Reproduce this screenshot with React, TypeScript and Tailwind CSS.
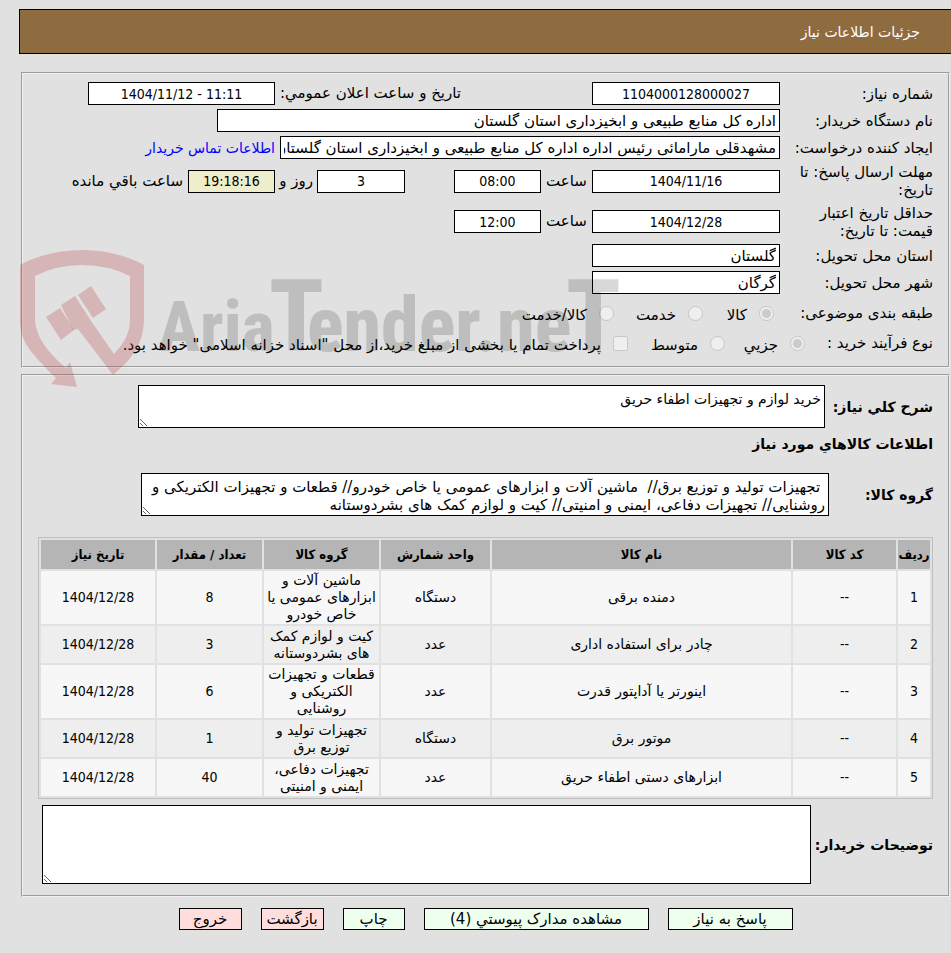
import React from "react";

const sans = "font-['DejaVu_Sans',sans-serif]";
const condensed = "font-['DejaVu_Sans_Condensed','DejaVu_Sans',sans-serif]";

const field = "h-[23px] border border-black px-[3px] leading-[18px] outline-none";
const textField = `${field} bg-white text-[15px] ${sans}`;
const numberField = `${field} text-center text-sm ${condensed}`;
const area =
  "block border border-black bg-white px-[3px] py-1 leading-[18px] outline-none resize";
const rowLabel = "w-[153px] shrink-0 pe-[14px] leading-[18px]";
const strongLabel = "shrink-0 text-sm font-bold";
const fieldset =
  "min-w-0 border-2 border-[#f0f0f0] px-[15px] [border-style:groove]";

type Item = {
  name: string;
  unit: string;
  group: string;
  count: string;
  date: string;
};

const items: Item[] = [
  { name: "دمنده برقی", unit: "دستگاه", group: "ماشین آلات و ابزارهای عمومی یا خاص خودرو", count: "8", date: "1404/12/28" },
  { name: "چادر برای استفاده اداری", unit: "عدد", group: "کیت و لوازم کمک های بشردوستانه", count: "3", date: "1404/12/28" },
  { name: "اینورتر یا آداپتور قدرت", unit: "عدد", group: "قطعات و تجهیزات الکتریکی و روشنایی", count: "6", date: "1404/12/28" },
  { name: "موتور برق", unit: "دستگاه", group: "تجهیزات تولید و توزیع برق", count: "1", date: "1404/12/28" },
  { name: "ابزارهای دستی اطفاء حریق", unit: "عدد", group: "تجهیزات دفاعی، ایمنی و امنیتی", count: "40", date: "1404/12/28" },
];

const columns = [
  { title: "ردیف", width: "w-[32px]" },
  { title: "کد کالا", width: "w-[103px]" },
  { title: "نام کالا", width: "w-auto" },
  { title: "واحد شمارش", width: "w-[109px]" },
  { title: "گروه کالا", width: "w-[115px]" },
  { title: "تعداد / مقدار", width: "w-[105px]" },
  { title: "تاریخ نیاز", width: "w-[114px]" },
];

function TextField({ id, value, width }: { id: string; value: string; width: string }) {
  return <input id={id} readOnly value={value} className={`${textField} ${width}`} />;
}

function NumberField({
  id,
  value,
  className,
  label,
  background = "bg-white",
}: {
  id: string;
  value: string;
  className: string;
  label?: string;
  background?: string;
}) {
  return (
    <input
      id={id}
      aria-label={label}
      dir="ltr"
      readOnly
      value={value}
      className={`${numberField} ${background} ${className}`}
    />
  );
}

function Choice({
  type = "radio",
  name,
  text,
  checked = false,
  width,
}: {
  type?: "radio" | "checkbox";
  name: string;
  text: string;
  checked?: boolean;
  width: string;
}) {
  return (
    <label className={`flex shrink-0 items-center gap-3 whitespace-nowrap ${width}`}>
      <input
        type={type}
        name={name}
        disabled
        defaultChecked={checked}
        className="size-[15px] shrink-0"
      />
      <span className="pt-1">{text}</span>
    </label>
  );
}

function Watermark() {
  return (
    <svg
      aria-hidden="true"
      className="pointer-events-none absolute left-5 top-[245px]"
      width="605"
      height="145"
      viewBox="20 245 605 145"
    >
      <g fill="#b8323c" fillOpacity="0.25">
        <path d="M20 265Q48 250 82 250Q116 250 144 265V318C144 344 132 359 113 375L78 329L73 330L61 305L75 296L91 321L114 354C125 342 130 333 130 318V276Q108 265 82 265Q56 265 35 276V318C35 338 50 354 66 368L70 362L77 387L51 384L56 378C35 357 20 343 20 322Z" />
        <path d="M46 317L60 308L74 330L61 340Z" />
        <path d="M78 295L91 286L106 309L93 318Z" />
      </g>
      <g
        opacity="0.15"
        fontFamily="'Roboto Condensed', Roboto, sans-serif"
        fontWeight="800"
      >
        <text direction="ltr" y="351" fontSize="76">
          <tspan x="158" fontSize="70">Aria</tspan>
          <tspan x="269" fontSize="100">T</tspan>
          <tspan x="307">ender.ne</tspan>
          <tspan x="566" fontSize="100">T</tspan>
        </text>
      </g>
    </svg>
  );
}

const green = "bg-[#eeffee]";
const red = "bg-[#ffdddd]";
const actions = [
  { text: "پاسخ به نیاز", style: `${green} w-[125px]` },
  { text: "مشاهده مدارک پيوستي (4)", style: `${green} w-[225px]` },
  { text: "چاپ", style: `${green} w-[62px]` },
  { text: "بازگشت", style: `${red} w-[63px]` },
  { text: "خروج", style: `${red} w-[63px]` },
];

export default function App() {
  return (
    <div
      dir="rtl"
      className={`relative min-h-screen bg-[#e1e1e1] pt-[9px] text-[15px] text-black ${sans}`}
    >
      <header className="ml-[19px] flex h-[45px] items-center border border-r-0 border-black bg-[#8f6c40] pr-[31px]">
        <h1 className="text-sm text-white">جزئیات اطلاعات نیاز</h1>
      </header>

      <main className="ml-[21px] mr-px mt-[18px]">
        <fieldset className={`${fieldset} flex flex-col gap-1 pb-2 pt-2`}>
          <div className="flex items-center">
            <label htmlFor="number" className={rowLabel}>شماره نیاز:</label>
            <NumberField id="number" value="1104000128000027" className="w-[188px]" />
            <label htmlFor="announced" className="w-[317px] shrink-0 pe-[5px] text-end">
              تاریخ و ساعت اعلان عمومي:
            </label>
            <NumberField id="announced" value="1404/11/12 - 11:11" className="w-[187px]" />
          </div>
          <div className="flex items-center">
            <label htmlFor="buyer" className={rowLabel}>نام دستگاه خریدار:</label>
            <TextField id="buyer" value="اداره کل منابع طبیعی و ابخیزداری استان گلستان" width="w-[563px]" />
          </div>
          <div className="flex items-center">
            <label htmlFor="creator" className={`${rowLabel} whitespace-nowrap`}>ایجاد کننده درخواست:</label>
            <TextField
              id="creator"
              value="مشهدقلی مارامائی رئیس اداره اداره کل منابع طبیعی و ابخیزداری استان گلستان"
              width="w-[500px]"
            />
            <a href="#contact" className="ms-[5px] text-sm text-[#0000ff]">اطلاعات تماس خریدار</a>
          </div>
          <div className="flex items-center">
            <label htmlFor="deadline" className={rowLabel}>مهلت ارسال پاسخ: تا تاریخ:</label>
            <NumberField id="deadline" value="1404/11/16" className="w-[188px]" />
            <label htmlFor="deadline-hour" className="w-[51px] text-center">ساعت</label>
            <NumberField id="deadline-hour" value="08:00" className="w-[87px]" />
            <NumberField id="days" label="روز" value="3" className="mr-[49px] w-[88px]" />
            <label htmlFor="remaining" className="w-[42px] whitespace-nowrap ps-1">روز و</label>
            <NumberField id="remaining" value="19:18:16" background="bg-[#eeeecc]" className="w-[87px]" />
            <span className="ps-[5px]">ساعت باقي مانده</span>
          </div>
          <div className="flex min-h-[37px] items-center">
            <label htmlFor="validity" className={rowLabel}>حداقل تاریخ اعتبار قیمت: تا تاریخ:</label>
            <NumberField id="validity" value="1404/12/28" className="w-[188px]" />
            <label htmlFor="validity-hour" className="w-[51px] text-center">ساعت</label>
            <NumberField id="validity-hour" value="12:00" className="w-[87px]" />
          </div>
          <div className="flex items-center">
            <label htmlFor="province" className={rowLabel}>استان محل تحویل:</label>
            <TextField id="province" value="گلستان" width="w-[188px]" />
          </div>
          <div className="flex items-center">
            <label htmlFor="city" className={rowLabel}>شهر محل تحویل:</label>
            <TextField id="city" value="گرگان" width="w-[188px]" />
          </div>
          <div>
            <div role="radiogroup" aria-labelledby="subject" className="flex h-[30px] items-center">
              <span id="subject" className="w-[159px] shrink-0">طبقه بندی موضوعی:</span>
              <Choice name="subject" text="کالا" checked width="w-[71px]" />
              <Choice name="subject" text="خدمت" width="w-[89px]" />
              <Choice name="subject" text="کالا/خدمت" width="w-[120px]" />
            </div>
            <div role="radiogroup" aria-labelledby="process" className="flex h-[30px] items-center">
              <span id="process" className="w-[128px] shrink-0">نوع فرآیند خرید :</span>
              <Choice name="process" text="جزيي" checked width="w-[80px]" />
              <Choice name="process" text="متوسط" width="w-[97px]" />
              <Choice
                type="checkbox"
                name="treasury"
                text={'پرداخت تمام یا بخشی از مبلغ خرید،از محل "اسناد خزانه اسلامی" خواهد بود.'}
                width="w-auto"
              />
            </div>
          </div>
        </fieldset>

        <fieldset className={`${fieldset} mt-[6px] pb-[11px] pt-[9px]`}>
          <div className="flex items-center">
            <label htmlFor="summary" className={`${strongLabel} w-[108px]`}>شرح کلي نیاز:</label>
            <textarea
              id="summary"
              readOnly
              value="خرید لوازم و تجهیزات اطفاء حریق"
              className={`${area} h-[43px] w-[687px] text-sm leading-[18px]`}
            />
          </div>
          <h2 className="flex h-[45px] items-center pb-[13px] text-sm font-bold">
            اطلاعات کالاهاي مورد نیاز
          </h2>
          <div className="flex items-center">
            <label htmlFor="groups" className={`${strongLabel} w-[104px]`}>گروه کالا:</label>
            <textarea
              id="groups"
              readOnly
              value={" تجهیزات تولید و توزیع برق//  ماشین آلات و ابزارهای عمومی یا خاص خودرو// قطعات و تجهیزات الکتریکی و روشنایی// تجهیزات دفاعی، ایمنی و امنیتی// کیت و لوازم کمک های بشردوستانه"}
              className={`${area} h-[43px] w-[688px] overflow-hidden text-[15px] leading-[18px]`}
            />
          </div>

          <table className="mt-[21px] w-full table-fixed border-separate border-spacing-[2px] border border-[#bfbfbf] text-center text-sm leading-[17px]">
            <thead>
              <tr className={`h-[29px] bg-[#b5b5b5] text-[13px] ${condensed}`}>
                {columns.map((c) => (
                  <th key={c.title} className={`${c.width} whitespace-nowrap font-bold`}>{c.title}</th>
                ))}
              </tr>
            </thead>
            <tbody>
              {items.map((it, i) => (
                <tr key={it.name} className="h-[37px] bg-[#f7f7f7] even:bg-[#eeeeee]">
                  <td className={condensed}>{i + 1}</td>
                  <td className={condensed}>--</td>
                  <td>{it.name}</td>
                  <td>{it.unit}</td>
                  <td className="px-[3px] py-px">{it.group}</td>
                  <td className={condensed}>{it.count}</td>
                  <td className={condensed}>{it.date}</td>
                </tr>
              ))}
            </tbody>
          </table>

          <div className="mt-[6px] flex items-center">
            <label htmlFor="notes" className={`${strongLabel} w-[122px]`}>توضیحات خریدار:</label>
            <textarea id="notes" readOnly value="" className={`${area} h-[79px] w-[769px]`} />
          </div>
        </fieldset>

        <div className="flex justify-center gap-[19px] py-[11px]">
          {actions.map((a) => (
            <button
              key={a.text}
              type="button"
              className={`h-[22px] whitespace-nowrap border border-black leading-5 ${a.style}`}
            >
              {a.text}
            </button>
          ))}
        </div>
      </main>

      <Watermark />
    </div>
  );
}
